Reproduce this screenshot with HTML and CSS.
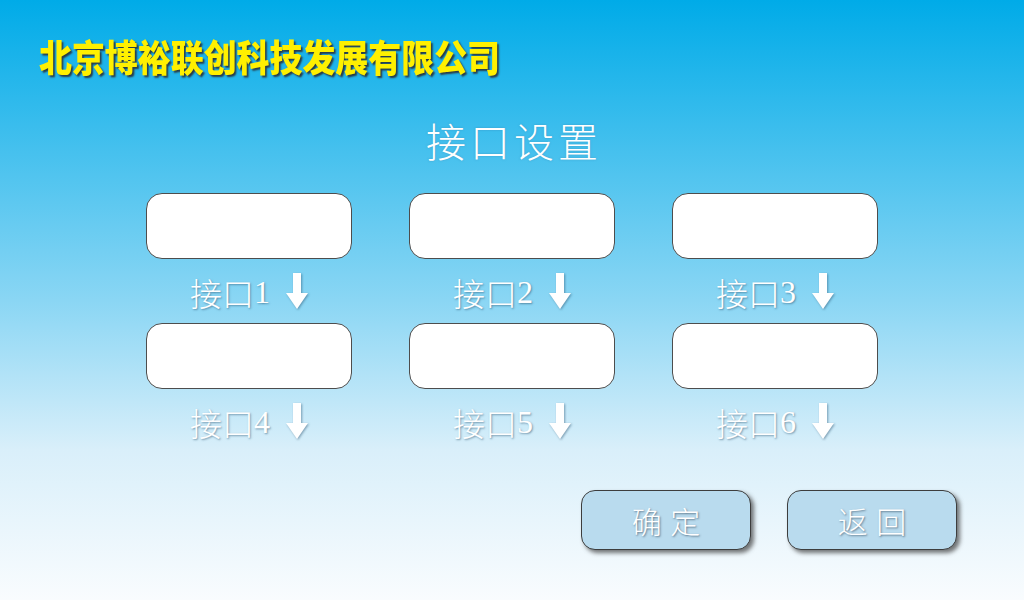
FILE: index.html
```html
<!DOCTYPE html>
<html lang="zh-CN">
<head>
<meta charset="utf-8">
<title>接口设置</title>
<link rel="stylesheet" href="styles.css">
</head>
<body>
<div class="screen">
  <div class="brand"><span class="brand-text">北京博裕联创科技发展有限公司</span></div>
  <h1 class="title">接口设置</h1>
  <div class="grid">
    <div class="cell"><div class="field"></div><div class="label">接口<span class="num">1</span><svg class="arrow" viewBox="0 0 22 36"><polygon points="7,0 15,0 15,20 22,20 11,36 0,20 7,20"/></svg></div></div>
    <div class="cell"><div class="field"></div><div class="label">接口<span class="num">2</span><svg class="arrow" viewBox="0 0 22 36"><polygon points="7,0 15,0 15,20 22,20 11,36 0,20 7,20"/></svg></div></div>
    <div class="cell"><div class="field"></div><div class="label">接口<span class="num">3</span><svg class="arrow" viewBox="0 0 22 36"><polygon points="7,0 15,0 15,20 22,20 11,36 0,20 7,20"/></svg></div></div>
    <div class="cell"><div class="field"></div><div class="label">接口<span class="num">4</span><svg class="arrow" viewBox="0 0 22 36"><polygon points="7,0 15,0 15,20 22,20 11,36 0,20 7,20"/></svg></div></div>
    <div class="cell"><div class="field"></div><div class="label">接口<span class="num">5</span><svg class="arrow" viewBox="0 0 22 36"><polygon points="7,0 15,0 15,20 22,20 11,36 0,20 7,20"/></svg></div></div>
    <div class="cell"><div class="field"></div><div class="label">接口<span class="num">6</span><svg class="arrow" viewBox="0 0 22 36"><polygon points="7,0 15,0 15,20 22,20 11,36 0,20 7,20"/></svg></div></div>
  </div>
  <div class="actions">
    <button class="btn">确 定</button>
    <button class="btn">返 回</button>
  </div>
</div>
</body>
</html>
```
FILE: styles.css
```css
* { box-sizing: border-box; }
html, body { margin: 0; padding: 0; }
body { width: 1024px; height: 600px; overflow: hidden; }
.screen {
  width: 1024px;
  height: 600px;
  background: linear-gradient(to bottom, #00abe8 0%, #8ad6f4 50%, #d9effa 75%, #f9fcfe 100%);
  display: flex;
  flex-direction: column;
  font-family: "Liberation Serif", "Noto Sans CJK SC", serif;
}
.brand {
  padding: 34px 0 0 39px;
  height: 80px;
}
.brand-text {
  display: inline-block;
  font-family: "Noto Sans CJK SC", sans-serif;
  font-weight: 900;
  font-size: 37px;
  line-height: 44px;
  color: #fff000;
  text-shadow: 2px 2px 2px #2a3a44;
  transform: scaleX(0.89);
  transform-origin: left center;
  white-space: nowrap;
}
.title {
  margin: 36px 0 0 0;
  text-align: center;
  font-family: "Noto Sans CJK SC", sans-serif;
  font-weight: 300;
  font-size: 40px;
  line-height: 48px;
  letter-spacing: 4px;
  padding-left: 4px;
  color: #ffffff;
  text-shadow: 0 0 2px rgba(60, 120, 160, 0.5);
}
.grid {
  margin-top: 29px;
  display: grid;
  grid-template-columns: repeat(3, 206px);
  column-gap: 57px;
  justify-content: center;
}
.cell {
  display: flex;
  flex-direction: column;
  align-items: center;
}
.field {
  width: 206px;
  height: 66px;
  background: #ffffff;
  border: 1px solid #4d4d4d;
  border-radius: 16px;
}
.label {
  height: 64px;
  display: flex;
  align-items: center;
  justify-content: center;
  padding-top: 2px;
  font-family: "Noto Sans CJK SC", serif;
  font-weight: 300;
  font-size: 32px;
  color: #ffffff;
  text-shadow: 1px 1px 2px rgba(40, 80, 110, 0.55);
}
.num {
  font-family: "Liberation Serif", serif;
  font-size: 32px;
}
.arrow {
  width: 22px;
  height: 36px;
  margin-left: 16px;
  margin-top: -2px;
  fill: #ffffff;
  filter: drop-shadow(1px 1px 1px rgba(40, 80, 110, 0.5));
}
.actions {
  margin-top: 37px;
  display: flex;
  justify-content: flex-end;
  gap: 36px;
  padding-right: 67px;
}
.btn {
  width: 170px;
  height: 60px;
  background: #b9dbee;
  border: 1px solid #3d3d3d;
  border-radius: 14px;
  box-shadow: 3px 3px 4px rgba(60, 60, 60, 0.7);
  font-family: "Noto Sans CJK SC", sans-serif;
  font-weight: 300;
  font-size: 30px;
  letter-spacing: 1px;
  padding: 0 0 0 1px;
  color: #ffffff;
  text-shadow: 1px 1px 2px rgba(40, 60, 80, 0.6);
}
```
